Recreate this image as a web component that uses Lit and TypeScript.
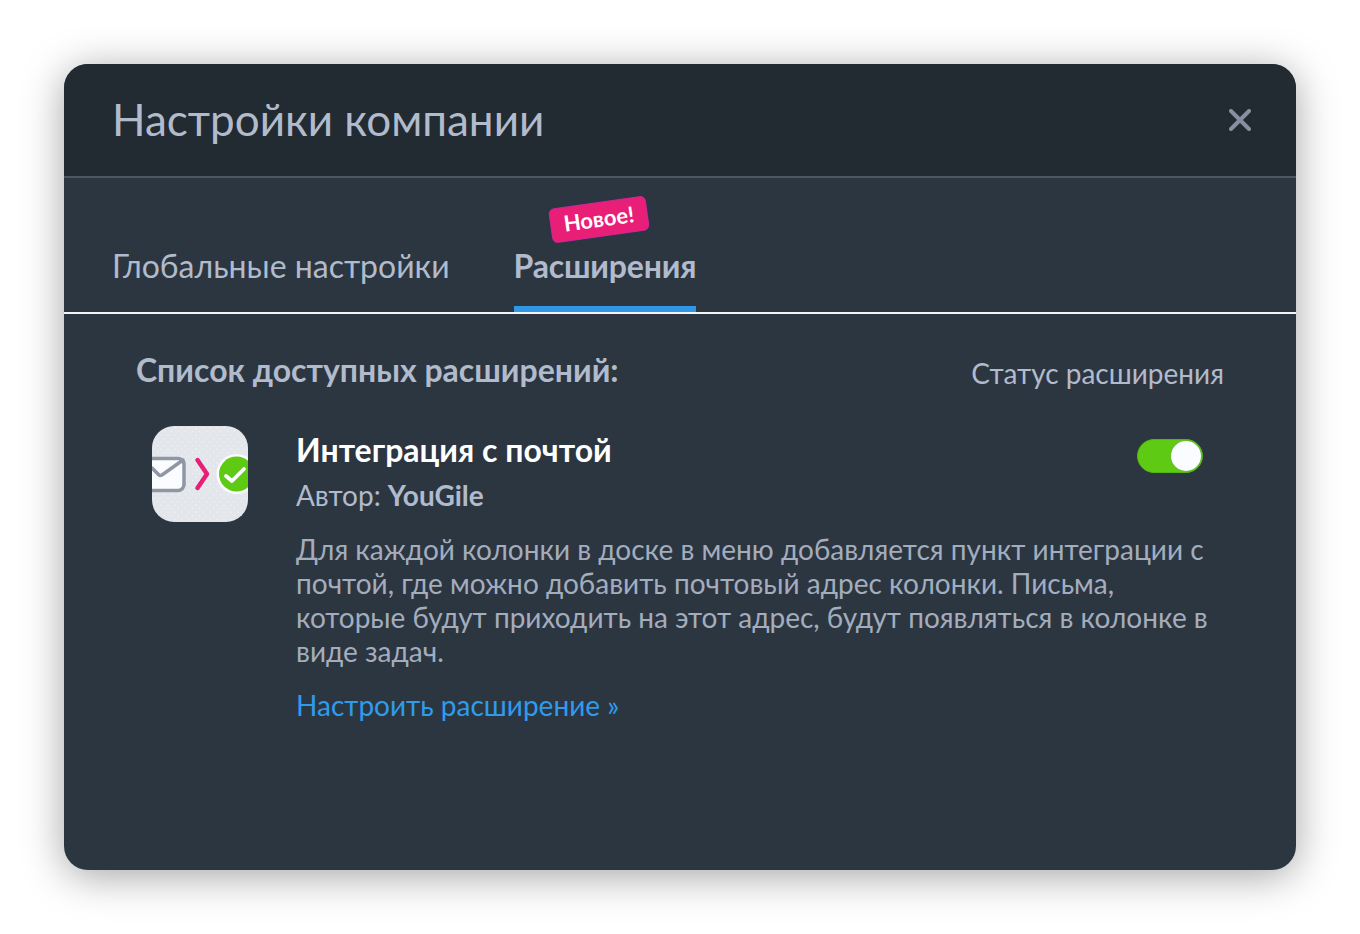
import { LitElement, css, html } from "lit";
import { customElement } from "lit/decorators.js";

@customElement("app-root")
export class AppRoot extends LitElement {
  static styles = css`
    :host {
      display: block;
      height: 934px;
      padding: 64px;
      box-sizing: border-box;
      background: #fff;
      font-family: Lato, "Noto Sans", sans-serif;
    }
    .dialog {
      height: 806px;
      border-radius: 24px;
      background: #2c3641;
      box-shadow: 0 6px 42px rgba(0, 0, 0, 0.36);
      overflow: hidden;
    }
    .header {
      height: 112px;
      background: #222a32;
      border-bottom: 2px solid #4b5967;
      display: flex;
      align-items: center;
      justify-content: space-between;
      padding: 0 45px 0 48px;
    }
    .title {
      font-size: 44px;
      line-height: 110px;
      height: 112px;
      color: #b1bbcc;
    }
    .close {
      display: block;
      width: 22px;
      height: 22px;
    }
    .tabs {
      height: 134px;
      border-bottom: 2px solid #f2f4f6;
      display: flex;
      gap: 64px;
      padding-left: 48px;
    }
    .tab {
      position: relative;
      height: 134px;
      box-sizing: border-box;
      padding-top: 68px;
      font-size: 32px;
      line-height: 40px;
      color: #b1bbcc;
    }
    .tab.active {
      font-weight: 700;
      letter-spacing: -0.2px;
      border-bottom: 6px solid #2f97e6;
    }
    .badge {
      position: absolute;
      left: 36px;
      top: 24px;
      padding: 0 12.5px;
      height: 35px;
      line-height: 32px;
      box-sizing: border-box;
      font-size: 22px;
      font-weight: 700;
      letter-spacing: 0;
      color: #fff;
      background: #e91e76;
      border: 1px solid #d0259f;
      border-radius: 6px;
      transform: rotate(-8deg);
    }
    .body {
      padding: 36px 72px 0;
    }
    .list-head {
      display: flex;
      justify-content: space-between;
      align-items: flex-start;
      color: #b1bbcc;
    }
    .list-title {
      font-size: 32px;
      font-weight: 700;
      line-height: 40px;
    }
    .status {
      font-size: 28px;
      line-height: 36px;
      padding-top: 5px;
    }
    .ext {
      display: flex;
      margin-top: 35px;
      padding-left: 16px;
    }
    .logo {
      flex: none;
      display: block;
      width: 96px;
      height: 96px;
      margin-right: 48px;
    }
    .info {
      flex: 1;
      min-width: 0;
      margin-top: -1px;
    }
    .name-row {
      display: flex;
      justify-content: space-between;
      align-items: flex-start;
    }
    .name {
      font-size: 32px;
      font-weight: 700;
      line-height: 50px;
      color: #ffffff;
    }
    .toggle {
      position: relative;
      width: 66px;
      height: 34px;
      margin: 14px 21px 0 0;
      box-sizing: border-box;
      border: 1px solid #55b512;
      border-radius: 17px;
      background: #5fca14;
    }
    .knob {
      position: absolute;
      right: 1px;
      top: 1px;
      width: 30px;
      height: 30px;
      border-radius: 50%;
      background: #fbfcff;
      box-shadow: 0 0 1px #7d8794;
    }
    .author {
      font-size: 28px;
      line-height: 40px;
      color: #b1bbcc;
    }
    .desc {
      margin: 17px 0 0;
      font-size: 28px;
      line-height: 34px;
      color: #a3adbd;
    }
    .link {
      display: block;
      margin-top: 19px;
      font-size: 28px;
      line-height: 36px;
      color: #2f9bec;
      text-decoration: none;
    }
  `;

  render() {
    return html`
      <div class="dialog">
        <div class="header">
          <div class="title">Настройки компании</div>
          <svg class="close" viewBox="0 0 22 22" fill="none">
            <path d="M2 2 20 20M20 2 2 20" stroke="#8690a0" stroke-width="4" stroke-linecap="round" />
          </svg>
        </div>
        <div class="tabs">
          <div class="tab">Глобальные настройки</div>
          <div class="tab active">
            <span class="badge">Новое!</span>
            Расширения
          </div>
        </div>
        <div class="body">
          <div class="list-head">
            <div class="list-title">Список доступных расширений:</div>
            <div class="status">Статус расширения</div>
          </div>
          <div class="ext">
            <svg class="logo" viewBox="0 0 96 96">
              <defs>
                <clipPath id="tile"><rect width="96" height="96" rx="22" /></clipPath>
                <pattern id="dots" width="7" height="7" patternUnits="userSpaceOnUse">
                  <circle cx="2" cy="2" r="0.6" fill="#f6f7f9" />
                  <circle cx="5.5" cy="5.5" r="0.6" fill="#f6f7f9" />
                </pattern>
              </defs>
              <g clip-path="url(#tile)">
                <rect width="96" height="96" fill="#e3e6eb" />
                <rect width="96" height="96" fill="url(#dots)" />
                <rect x="-20" y="32.5" width="52" height="32" rx="6" fill="#fbfcff" stroke="#8f97a5" stroke-width="3.5" />
                <path d="M0 42 7 49 Q8 50 10 49 L31 34" fill="none" stroke="#8f97a5" stroke-width="3.5" stroke-linecap="round" />
                <path d="M45.5 34 55 48 45.5 62" fill="none" stroke="#e91e76" stroke-width="4.5" stroke-linecap="round" stroke-linejoin="round" />
                <circle cx="84.5" cy="48" r="20" fill="#fbfcff" />
                <circle cx="84.5" cy="48" r="17.5" fill="#5fca14" />
                <path d="M74 50 80 55 92 43" fill="none" stroke="#fbfcff" stroke-width="3.8" stroke-linecap="round" stroke-linejoin="round" />
              </g>
            </svg>
            <div class="info">
              <div class="name-row">
                <div class="name">Интеграция с почтой</div>
                <div class="toggle"><div class="knob"></div></div>
              </div>
              <div class="author">Автор: <b>YouGile</b></div>
              <p class="desc">
                Для каждой колонки в доске в меню добавляется пункт интеграции с почтой, где можно
                добавить почтовый адрес колонки. Письма, которые будут приходить на этот адрес, будут
                появляться в колонке в виде задач.
              </p>
              <a class="link" href="#">Настроить расширение »</a>
            </div>
          </div>
        </div>
      </div>
    `;
  }
}
